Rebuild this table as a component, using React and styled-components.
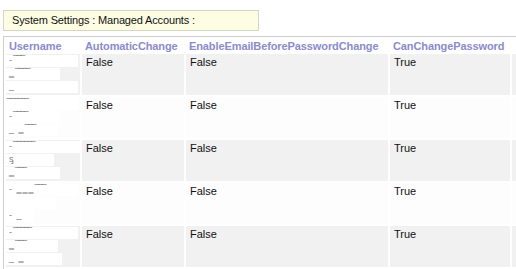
import styled, { createGlobalStyle } from 'styled-components';

const GlobalStyle = createGlobalStyle`
  html, body {
    margin: 0;
    padding: 0;
    background: #fff;
    overflow: hidden;
  }
  body {
    font-family: Tahoma, "Liberation Sans", sans-serif;
  }
`;

const Page = styled.div`
  width: 516px;
  height: 269px;
  padding: 10px 0 0 3px;
  box-sizing: border-box;
  overflow: hidden;
`;

const TitleBox = styled.div`
  width: 256px;
  height: 21px;
  box-sizing: border-box;
  border: 1px solid #d6d6c4;
  background: #fdfde3;
  color: #111;
  font-family: "Liberation Sans", Arial, sans-serif;
  font-size: 11px;
  letter-spacing: -0.15px;
  line-height: 19px;
  padding-left: 8px;
`;

const Table = styled.table`
  margin-top: 5px;
  width: 580px;
  border-collapse: separate;
  border-spacing: 2px;
  border-top: 1px solid #cfcfcf;
  border-left: 1px solid #cfcfcf;
  font-family: "Liberation Sans", Arial, sans-serif;
  font-size: 11px;
  table-layout: fixed;
`;

const Th = styled.th`
  text-align: left;
  font-weight: bold;
  color: #8b8bcd;
  padding: 1px 3px 0 3px;
  height: 12px;
  white-space: nowrap;
  overflow: hidden;
  letter-spacing: -0.1px;
`;

const Td = styled.td`
  background: ${(p) => (p.$alt ? '#f1f1f1' : '#fdfdfd')};
  vertical-align: top;
  color: #111;
  padding: 2px 4px;
  height: 37px;
  white-space: nowrap;
  overflow: hidden;
`;

const UserCell = styled(Td)`
  padding: 1px 0 0 0;
`;

const Redacted = styled.div`
  display: flex;
  flex-direction: column;
  gap: 1px;
`;

const RedactLine = styled.div`
  width: ${(p) => p.$w}px;
  height: 12px;
  background: #fff;
  color: #777;
  font-size: 9px;
  line-height: 11px;
  letter-spacing: 1px;
  overflow: hidden;
  padding-left: 3px;
  box-sizing: border-box;
`;

const rows = [
  ['‐  ̅ ̅ ̅', '‗ ̅ ̅ ̅ ̅', '_  '],
  ['̅ ̅ ̅ ̅ ̅  ̅', '‐  ̅ ̅ ̅ ̅', '_ ‗ ̅ ̅ ̅'],
  ['‐ ̅ ̅ ̅ ̅ ̅ ̅', 'ᶊ', '‗ ̅ ̅ ̅'],
  ['‐ ‗‗‗ ̅ ̅ ̅', '  ', '- _'],
  ['‐ ̅ ̅ ̅ ̅ ̅', '‗ ̅ ̅ ̅', '_ ‗'],
];

const widths = [
  [72, 54, 72],
  [72, 54, 52],
  [74, 48, 54],
  [72, 50, 28],
  [72, 52, 56],
];

export default function App() {
  return (
    <Page>
      <GlobalStyle />
      <TitleBox>System Settings : Managed Accounts :</TitleBox>
      <Table>
        <colgroup>
          <col style={{ width: 74 }} />
          <col style={{ width: 102 }} />
          <col style={{ width: 202 }} />
          <col style={{ width: 120 }} />
          <col style={{ width: 70 }} />
        </colgroup>
        <thead>
          <tr>
            <Th>Username</Th>
            <Th>AutomaticChange</Th>
            <Th>EnableEmailBeforePasswordChange</Th>
            <Th>CanChangePassword</Th>
            <Th></Th>
          </tr>
        </thead>
        <tbody>
          {rows.map((lines, i) => {
            const alt = i % 2 === 0;
            return (
              <tr key={i}>
                <UserCell $alt={alt}>
                  <Redacted>
                    {lines.map((t, j) => (
                      <RedactLine key={j} $w={widths[i][j]}>
                        {t}
                      </RedactLine>
                    ))}
                  </Redacted>
                </UserCell>
                <Td $alt={alt}>False</Td>
                <Td $alt={alt}>False</Td>
                <Td $alt={alt}>True</Td>
                <Td $alt={alt}></Td>
              </tr>
            );
          })}
        </tbody>
      </Table>
    </Page>
  );
}
